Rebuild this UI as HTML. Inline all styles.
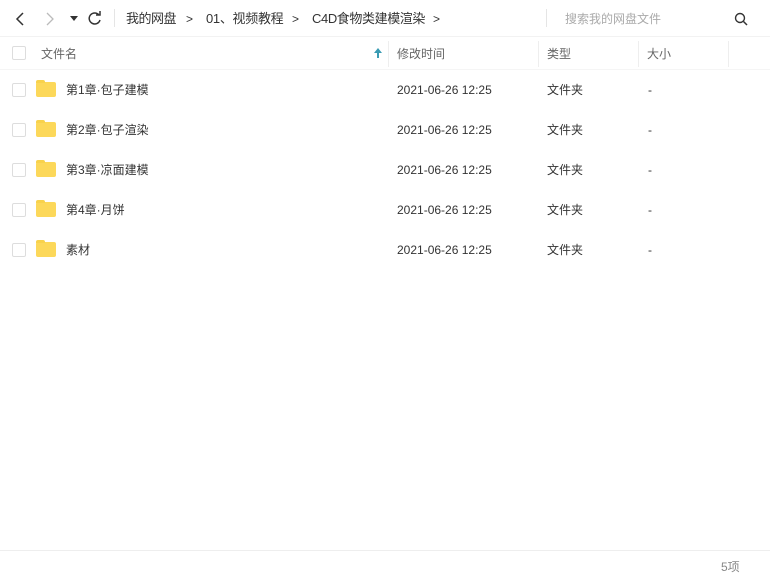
<!DOCTYPE html>
<html><head><meta charset="utf-8"><style>
body{margin:0;width:770px;height:582px;background:#fff;font-family:"Liberation Sans","Noto Sans CJK SC",sans-serif;font-size:12px;color:#333;position:relative;overflow:hidden}
.a{position:absolute;white-space:nowrap;line-height:16px}
.cb{position:absolute;left:12px;width:12px;height:12px;border:1px solid #ddd;border-radius:2px;background:#fff}
.fold{position:absolute;left:36px;width:20px;height:15px;background:#fcd85a;border-radius:2px}
.fold:before{content:"";position:absolute;left:0;top:-2px;width:9px;height:3px;background:#f8d24c;border-radius:2px 2px 0 0}
.vl{position:absolute;top:41px;height:26px;width:1px;background:#eee}
</style></head><body>
<svg class="a" style="left:14px;top:11px" width="12" height="16"><path d="M9 2 L3 8 L9 14" stroke="#333" stroke-width="1.5" fill="none"/></svg>
<svg class="a" style="left:44px;top:11px" width="12" height="16"><path d="M3 2 L9 8 L3 14" stroke="#bbb" stroke-width="1.3" fill="none"/></svg>
<svg class="a" style="left:70px;top:16px" width="8" height="6"><path d="M0 0 L8 0 L4 5Z" fill="#333"/></svg>
<svg class="a" style="left:87px;top:11px" width="15" height="15"><path d="M12 4 A5.5 5.5 0 1 0 13 9" stroke="#333" stroke-width="1.5" fill="none"/><path d="M9 4 L13 4 L13 0" stroke="#333" stroke-width="1.5" fill="none"/></svg>
<div class="a" style="left:114px;top:9px;width:1px;height:18px;background:#e5e5e5"></div>
<div class="a" style="left:126px;top:11px;font-size:13px;letter-spacing:-0.5px">我的网盘</div>
<div class="a" style="left:186px;top:11px;font-size:12px">&gt;</div>
<div class="a" style="left:206px;top:11px;font-size:13px;letter-spacing:-0.3px">01、视频教程</div>
<div class="a" style="left:292px;top:11px;font-size:12px">&gt;</div>
<div class="a" style="left:312px;top:11px;font-size:13px;letter-spacing:-0.4px">C4D食物类建模渲染</div>
<div class="a" style="left:433px;top:11px;font-size:12px">&gt;</div>
<div class="a" style="left:546px;top:9px;width:1px;height:18px;background:#e5e5e5"></div>
<div class="a" style="left:565px;top:11px;color:#aaa">搜索我的网盘文件</div>
<svg class="a" style="left:734px;top:12px" width="14" height="14"><circle cx="6" cy="6" r="4.5" stroke="#333" stroke-width="1.4" fill="none"/><path d="M9.5 9.5 L13 13" stroke="#333" stroke-width="1.5"/></svg>
<div class="a" style="left:0;top:36px;width:770px;height:1px;background:#f2f2f2"></div>
<div class="cb" style="top:46px"></div>
<div class="a" style="left:41px;top:46px;color:#666">文件名</div>
<svg class="a" style="left:373px;top:47px" width="10" height="12"><path d="M5 1 L9 6 L6 6 L6 11 L4 11 L4 6 L1 6Z" fill="#3a9bb3"/></svg>
<div class="vl" style="left:388px"></div>
<div class="a" style="left:397px;top:46px;color:#666">修改时间</div>
<div class="vl" style="left:538px"></div>
<div class="a" style="left:547px;top:46px;color:#666">类型</div>
<div class="vl" style="left:638px"></div>
<div class="a" style="left:647px;top:46px;color:#666">大小</div>
<div class="vl" style="left:728px"></div>
<div class="a" style="left:0;top:69px;width:770px;height:1px;background:#f5f5f5"></div>

<div class="cb" style="top:83px"></div><div class="fold" style="top:82px"></div><div class="a" style="left:66px;top:82px">第1章·包子建模</div><div class="a" style="left:397px;top:82px">2021-06-26 12:25</div><div class="a" style="left:547px;top:82px">文件夹</div><div class="a" style="left:648px;top:82px">-</div>
<div class="cb" style="top:123px"></div><div class="fold" style="top:122px"></div><div class="a" style="left:66px;top:122px">第2章·包子渲染</div><div class="a" style="left:397px;top:122px">2021-06-26 12:25</div><div class="a" style="left:547px;top:122px">文件夹</div><div class="a" style="left:648px;top:122px">-</div>
<div class="cb" style="top:163px"></div><div class="fold" style="top:162px"></div><div class="a" style="left:66px;top:162px">第3章·凉面建模</div><div class="a" style="left:397px;top:162px">2021-06-26 12:25</div><div class="a" style="left:547px;top:162px">文件夹</div><div class="a" style="left:648px;top:162px">-</div>
<div class="cb" style="top:203px"></div><div class="fold" style="top:202px"></div><div class="a" style="left:66px;top:202px">第4章·月饼</div><div class="a" style="left:397px;top:202px">2021-06-26 12:25</div><div class="a" style="left:547px;top:202px">文件夹</div><div class="a" style="left:648px;top:202px">-</div>
<div class="cb" style="top:243px"></div><div class="fold" style="top:242px"></div><div class="a" style="left:66px;top:242px">素材</div><div class="a" style="left:397px;top:242px">2021-06-26 12:25</div><div class="a" style="left:547px;top:242px">文件夹</div><div class="a" style="left:648px;top:242px">-</div>

<div class="a" style="left:0;top:550px;width:770px;height:1px;background:#eee"></div>
<div class="a" style="left:721px;top:559px;color:#888">5项</div>
</body></html>
